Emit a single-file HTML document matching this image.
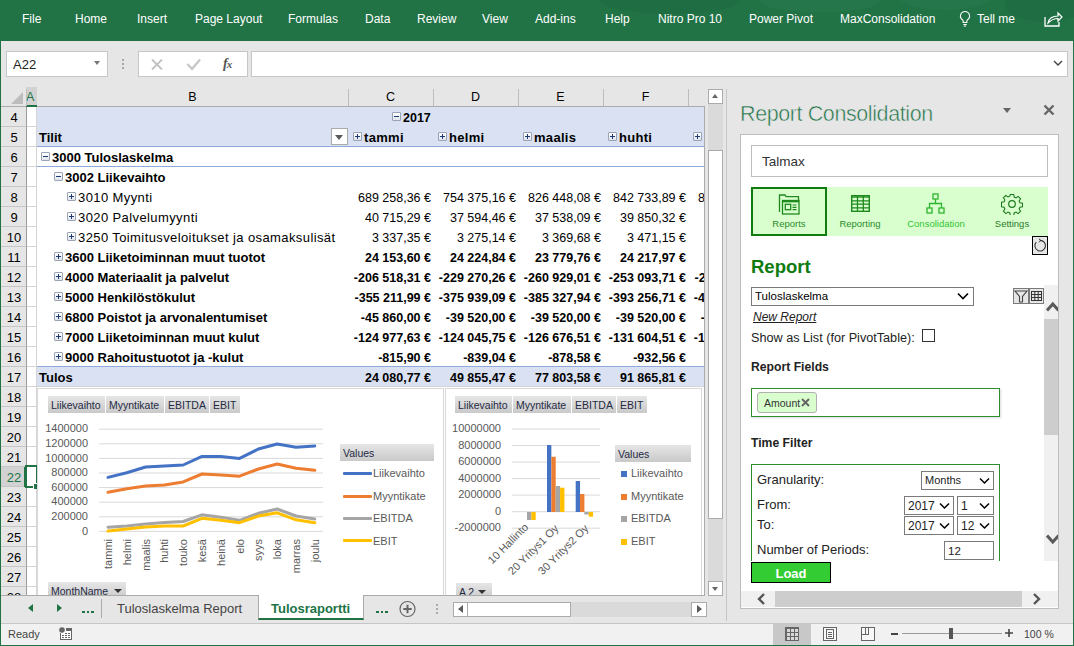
<!DOCTYPE html><html><head><meta charset="utf-8"><style>
*{box-sizing:border-box}
body{margin:0;width:1074px;height:646px;overflow:hidden;position:relative;background:#E6E6E6;font-family:"Liberation Sans",sans-serif;color:#000}
.ab{position:absolute}
.t{position:absolute;white-space:nowrap;line-height:1}
.rib{color:#fff;font-size:12px;top:13px}
.rh{position:absolute;left:1px;width:26px;height:20px;border-bottom:1px solid #C6C6C6;border-right:1px solid #9B9B9B;background:#E6E6E6;font-size:13px;text-align:center;line-height:21px;color:#000;padding-left:1px}
.cell{position:absolute;white-space:nowrap;font-size:12.5px;line-height:20px;height:20px;padding-top:1px}
.lab{font-size:13px}
.lab.r{letter-spacing:0.4px}
.num{text-align:right}
.b{font-weight:bold}
.pb{position:absolute;width:9px;height:9px;border:1px solid #9AA3B5;background:linear-gradient(#fff,#E0E4EC);border-radius:1px}
.pb:before{content:"";position:absolute;left:1px;top:3px;width:5px;height:1px;background:#1F3A73}
.pb.p:after{content:"";position:absolute;left:3px;top:1px;width:1px;height:5px;background:#1F3A73}
.fb{position:absolute;height:17px;background:linear-gradient(#E6E6E6,#C9C9C9);font-size:10.5px;line-height:18px;color:#1F2A44;padding-left:3px;white-space:nowrap;overflow:hidden}
.leg{position:absolute;font-size:11px;color:#595959;white-space:nowrap;line-height:14px}
.ax{font-size:11px;fill:#595959;font-family:"Liberation Sans",sans-serif}

</style></head><body>
<div class="ab" style="left:0;top:0;width:1074px;height:41px;background:#217346;overflow:hidden"><div class="ab" style="left:600px;top:-14px;width:140px;height:28px;border-radius:50%;background:#1F6C42;opacity:.7"></div><div class="ab" style="left:760px;top:-10px;width:120px;height:22px;border-radius:50%;background:#2A7B50;opacity:.5"></div><div class="ab" style="left:1005px;top:-12px;width:80px;height:34px;border-radius:50%;background:#1F6B41;opacity:.8"></div><div class="ab" style="left:900px;top:-14px;width:90px;height:24px;border-radius:50%;background:#2A7B50;opacity:.5"></div></div>
<div class="t rib" style="left:22px">File</div>
<div class="t rib" style="left:75px">Home</div>
<div class="t rib" style="left:137px">Insert</div>
<div class="t rib" style="left:195px">Page Layout</div>
<div class="t rib" style="left:288px">Formulas</div>
<div class="t rib" style="left:365px">Data</div>
<div class="t rib" style="left:417px">Review</div>
<div class="t rib" style="left:482px">View</div>
<div class="t rib" style="left:535px">Add-ins</div>
<div class="t rib" style="left:605px">Help</div>
<div class="t rib" style="left:658px">Nitro Pro 10</div>
<div class="t rib" style="left:749px">Power Pivot</div>
<div class="t rib" style="left:840px">MaxConsolidation</div>
<div class="t rib" style="left:977px">Tell me</div>
<svg class="ab" style="left:958px;top:10px" width="14" height="18" viewBox="0 0 14 18"><path d="M7 1.5a4.5 4.5 0 0 0-2.6 8.2c.5.4.8 1 .8 1.6v1.2h3.6v-1.2c0-.6.3-1.2.8-1.6A4.5 4.5 0 0 0 7 1.5z" fill="none" stroke="#fff" stroke-width="1.1"/><path d="M5.3 14.5h3.4M5.8 16h2.4" stroke="#fff" stroke-width="1.1"/></svg>
<svg class="ab" style="left:1043px;top:10px" width="20" height="18" viewBox="0 0 20 18"><path d="M2 7v9h14v-4" fill="none" stroke="#fff" stroke-width="1.3"/><path d="M5 13c1-5 5-7 10-7V3l4 4-4 4V8.5c-4 0-7 1.5-10 4.5z" fill="none" stroke="#fff" stroke-width="1.2"/></svg>
<div class="ab" style="left:0;top:41px;width:1px;height:605px;background:#217346"></div>
<div class="ab" style="left:1073px;top:41px;width:1px;height:605px;background:#217346"></div>
<div class="ab" style="left:0;top:645px;width:1074px;height:1px;background:#217346"></div>
<div class="ab" style="left:6px;top:51px;width:102px;height:26px;background:#fff;border:1px solid #C6C6C6"></div>
<div class="t" style="left:13px;top:58px;font-size:13px;color:#222">A22</div>
<div class="ab" style="left:94px;top:61px;width:0;height:0;border-left:3.5px solid transparent;border-right:3.5px solid transparent;border-top:4px solid #777"></div>
<div class="ab" style="left:122px;top:59px;width:2px;height:2px;background:#A8A8A8"></div>
<div class="ab" style="left:122px;top:63px;width:2px;height:2px;background:#A8A8A8"></div>
<div class="ab" style="left:122px;top:67px;width:2px;height:2px;background:#A8A8A8"></div>
<div class="ab" style="left:138px;top:51px;width:110px;height:26px;background:#fff;border:1px solid #C6C6C6"></div>
<svg class="ab" style="left:151px;top:59px" width="12" height="11"><path d="M1 0.5l10 10M11 0.5L1 10.5" stroke="#C0C0C0" stroke-width="1.8"/></svg>
<svg class="ab" style="left:186px;top:58px" width="15" height="13"><path d="M1.5 6l4.5 5 8-9.5" fill="none" stroke="#C8C8C8" stroke-width="2.4"/></svg>
<div class="t" style="left:223px;top:57px;font-family:'Liberation Serif',serif;font-style:italic;font-weight:bold;font-size:14px;color:#555">f<span style="font-size:11px;margin-left:-1px">x</span></div>
<div class="ab" style="left:251px;top:51px;width:817px;height:26px;background:#fff;border:1px solid #C6C6C6"></div>
<svg class="ab" style="left:1053px;top:60px" width="10" height="7"><path d="M1 1l4 4 4-4" fill="none" stroke="#444" stroke-width="1.4"/></svg>
<div class="ab" style="left:1px;top:87px;width:704px;height:20px;background:#E6E6E6;border-bottom:1px solid #ABABAB"></div>
<svg class="ab" style="left:10px;top:92px" width="14" height="13"><path d="M13 0V12H1z" fill="#BDBDBD"/></svg>
<div class="ab" style="left:26px;top:87px;width:11px;height:20px;background:#D2D2D2;border-bottom:2px solid #217346"></div>
<div class="t" style="left:26px;top:91px;font-size:12.5px;color:#217346">A</div>
<div class="ab" style="left:348px;top:89px;width:1px;height:17px;background:#BDBDBD"></div>
<div class="t" style="left:37px;width:311px;text-align:center;top:91px;font-size:12.5px">B</div>
<div class="ab" style="left:433px;top:89px;width:1px;height:17px;background:#BDBDBD"></div>
<div class="t" style="left:348px;width:85px;text-align:center;top:91px;font-size:12.5px">C</div>
<div class="ab" style="left:518px;top:89px;width:1px;height:17px;background:#BDBDBD"></div>
<div class="t" style="left:433px;width:85px;text-align:center;top:91px;font-size:12.5px">D</div>
<div class="ab" style="left:603px;top:89px;width:1px;height:17px;background:#BDBDBD"></div>
<div class="t" style="left:518px;width:85px;text-align:center;top:91px;font-size:12.5px">E</div>
<div class="ab" style="left:688px;top:89px;width:1px;height:17px;background:#BDBDBD"></div>
<div class="t" style="left:603px;width:85px;text-align:center;top:91px;font-size:12.5px">F</div>
<div class="ab" style="left:26px;top:89px;width:1px;height:17px;background:#BDBDBD"></div>
<div class="ab" style="left:27px;top:107px;width:677px;height:488px;background:#fff"></div>
<div class="rh" style="top:107px;">4</div>
<div class="rh" style="top:127px;">5</div>
<div class="rh" style="top:147px;">6</div>
<div class="rh" style="top:167px;">7</div>
<div class="rh" style="top:187px;">8</div>
<div class="rh" style="top:207px;">9</div>
<div class="rh" style="top:227px;">10</div>
<div class="rh" style="top:247px;">11</div>
<div class="rh" style="top:267px;">12</div>
<div class="rh" style="top:287px;">13</div>
<div class="rh" style="top:307px;">14</div>
<div class="rh" style="top:327px;">15</div>
<div class="rh" style="top:347px;">16</div>
<div class="rh" style="top:367px;">17</div>
<div class="rh" style="top:387px;">18</div>
<div class="rh" style="top:407px;">19</div>
<div class="rh" style="top:427px;">20</div>
<div class="rh" style="top:447px;">21</div>
<div class="rh" style="top:467px;background:#D2D2D2;color:#217346;">22</div>
<div class="rh" style="top:487px;">23</div>
<div class="rh" style="top:507px;">24</div>
<div class="rh" style="top:527px;">25</div>
<div class="rh" style="top:547px;">26</div>
<div class="rh" style="top:567px;">27</div>
<div class="rh" style="top:587px;">28</div>
<div class="ab" style="left:24px;top:467px;width:2px;height:20px;background:#217346"></div>
<div class="ab" style="left:27px;top:126px;width:10px;height:1px;background:#D4D4D4"></div>
<div class="ab" style="left:27px;top:146px;width:10px;height:1px;background:#D4D4D4"></div>
<div class="ab" style="left:27px;top:166px;width:10px;height:1px;background:#D4D4D4"></div>
<div class="ab" style="left:27px;top:186px;width:10px;height:1px;background:#D4D4D4"></div>
<div class="ab" style="left:27px;top:206px;width:10px;height:1px;background:#D4D4D4"></div>
<div class="ab" style="left:27px;top:226px;width:10px;height:1px;background:#D4D4D4"></div>
<div class="ab" style="left:27px;top:246px;width:10px;height:1px;background:#D4D4D4"></div>
<div class="ab" style="left:27px;top:266px;width:10px;height:1px;background:#D4D4D4"></div>
<div class="ab" style="left:27px;top:286px;width:10px;height:1px;background:#D4D4D4"></div>
<div class="ab" style="left:27px;top:306px;width:10px;height:1px;background:#D4D4D4"></div>
<div class="ab" style="left:27px;top:326px;width:10px;height:1px;background:#D4D4D4"></div>
<div class="ab" style="left:27px;top:346px;width:10px;height:1px;background:#D4D4D4"></div>
<div class="ab" style="left:27px;top:366px;width:10px;height:1px;background:#D4D4D4"></div>
<div class="ab" style="left:27px;top:386px;width:10px;height:1px;background:#D4D4D4"></div>
<div class="ab" style="left:27px;top:406px;width:10px;height:1px;background:#D4D4D4"></div>
<div class="ab" style="left:27px;top:426px;width:10px;height:1px;background:#D4D4D4"></div>
<div class="ab" style="left:27px;top:446px;width:10px;height:1px;background:#D4D4D4"></div>
<div class="ab" style="left:27px;top:466px;width:10px;height:1px;background:#D4D4D4"></div>
<div class="ab" style="left:27px;top:486px;width:10px;height:1px;background:#D4D4D4"></div>
<div class="ab" style="left:27px;top:506px;width:10px;height:1px;background:#D4D4D4"></div>
<div class="ab" style="left:27px;top:526px;width:10px;height:1px;background:#D4D4D4"></div>
<div class="ab" style="left:27px;top:546px;width:10px;height:1px;background:#D4D4D4"></div>
<div class="ab" style="left:27px;top:566px;width:10px;height:1px;background:#D4D4D4"></div>
<div class="ab" style="left:27px;top:586px;width:10px;height:1px;background:#D4D4D4"></div>
<div class="ab" style="left:27px;top:606px;width:10px;height:1px;background:#D4D4D4"></div>
<div class="ab" style="left:36px;top:107px;width:1px;height:488px;background:#D4D4D4"></div>
<div class="ab" style="left:37px;top:107px;width:667px;height:39px;background:#D9E1F2"></div>
<div class="ab" style="left:37px;top:146px;width:667px;height:1px;background:#8EA9DB"></div>
<div class="ab" style="left:37px;top:166px;width:667px;height:1px;background:#8EA9DB"></div>
<div class="ab" style="left:37px;top:366px;width:667px;height:1px;background:#8EA9DB"></div>
<div class="ab" style="left:37px;top:367px;width:667px;height:20px;background:#D9E1F2"></div>
<div class="pb" style="left:392px;top:112px"></div>
<div class="cell b" style="left:403px;top:107px">2017</div>
<div class="cell lab b" style="left:39px;top:127px">Tilit</div>
<div class="ab" style="left:331px;top:128px;width:17px;height:17px;background:#fff;border:1px solid #ABABAB"></div>
<div class="ab" style="left:335px;top:135px;width:0;height:0;border-left:4.5px solid transparent;border-right:4.5px solid transparent;border-top:5px solid #5A5A5A"></div>
<div class="pb p" style="left:353px;top:132px"></div>
<div class="cell lab b" style="left:364px;top:127px;letter-spacing:0.3px">tammi</div>
<div class="pb p" style="left:438px;top:132px"></div>
<div class="cell lab b" style="left:449px;top:127px;letter-spacing:0.3px">helmi</div>
<div class="pb p" style="left:523px;top:132px"></div>
<div class="cell lab b" style="left:534px;top:127px;letter-spacing:0.3px">maalis</div>
<div class="pb p" style="left:608px;top:132px"></div>
<div class="cell lab b" style="left:619px;top:127px;letter-spacing:0.3px">huhti</div>
<div class="pb p" style="left:693px;top:132px"></div>
<div class="pb " style="left:41px;top:152px"></div>
<div class="cell lab b" style="left:52px;top:147px">3000 Tuloslaskelma</div>
<div class="pb " style="left:54px;top:172px"></div>
<div class="cell lab b" style="left:65px;top:167px">3002 Liikevaihto</div>
<div class="pb p" style="left:67px;top:192px"></div>
<div class="cell lab r" style="left:78px;top:187px">3010 Myynti</div>
<div class="cell num" style="left:333px;width:98px;top:187px">689 258,36 €</div>
<div class="cell num" style="left:418px;width:98px;top:187px">754 375,16 €</div>
<div class="cell num" style="left:503px;width:98px;top:187px">826 448,08 €</div>
<div class="cell num" style="left:588px;width:98px;top:187px">842 733,89 €</div>
<div class="ab" style="left:688px;top:187px;width:16px;height:20px;overflow:hidden"><div class="cell num" style="left:-15px;width:98px;top:0">812 455,21 €</div></div>
<div class="pb p" style="left:67px;top:212px"></div>
<div class="cell lab r" style="left:78px;top:207px">3020 Palvelumyynti</div>
<div class="cell num" style="left:333px;width:98px;top:207px">40 715,29 €</div>
<div class="cell num" style="left:418px;width:98px;top:207px">37 594,46 €</div>
<div class="cell num" style="left:503px;width:98px;top:207px">37 538,09 €</div>
<div class="cell num" style="left:588px;width:98px;top:207px">39 850,32 €</div>
<div class="ab" style="left:688px;top:207px;width:16px;height:20px;overflow:hidden"><div class="cell num" style="left:-15px;width:98px;top:0">38 112,05 €</div></div>
<div class="pb p" style="left:67px;top:232px"></div>
<div class="cell lab r" style="left:78px;top:227px">3250 Toimitusveloitukset ja osamaksulisät</div>
<div class="cell num" style="left:333px;width:98px;top:227px">3 337,35 €</div>
<div class="cell num" style="left:418px;width:98px;top:227px">3 275,14 €</div>
<div class="cell num" style="left:503px;width:98px;top:227px">3 369,68 €</div>
<div class="cell num" style="left:588px;width:98px;top:227px">3 471,15 €</div>
<div class="ab" style="left:688px;top:227px;width:16px;height:20px;overflow:hidden"><div class="cell num" style="left:-15px;width:98px;top:0">3 402,77 €</div></div>
<div class="pb p" style="left:54px;top:252px"></div>
<div class="cell lab b" style="left:65px;top:247px">3600 Liiketoiminnan muut tuotot</div>
<div class="cell num b" style="left:333px;width:98px;top:247px">24 153,60 €</div>
<div class="cell num b" style="left:418px;width:98px;top:247px">24 224,84 €</div>
<div class="cell num b" style="left:503px;width:98px;top:247px">23 779,76 €</div>
<div class="cell num b" style="left:588px;width:98px;top:247px">24 217,97 €</div>
<div class="ab" style="left:688px;top:247px;width:16px;height:20px;overflow:hidden"><div class="cell num b" style="left:-15px;width:98px;top:0">24 301,12 €</div></div>
<div class="pb p" style="left:54px;top:272px"></div>
<div class="cell lab b" style="left:65px;top:267px">4000 Materiaalit ja palvelut</div>
<div class="cell num b" style="left:333px;width:98px;top:267px">-206 518,31 €</div>
<div class="cell num b" style="left:418px;width:98px;top:267px">-229 270,26 €</div>
<div class="cell num b" style="left:503px;width:98px;top:267px">-260 929,01 €</div>
<div class="cell num b" style="left:588px;width:98px;top:267px">-253 093,71 €</div>
<div class="ab" style="left:688px;top:267px;width:16px;height:20px;overflow:hidden"><div class="cell num b" style="left:-15px;width:98px;top:0">-241 118,40 €</div></div>
<div class="pb p" style="left:54px;top:292px"></div>
<div class="cell lab b" style="left:65px;top:287px">5000 Henkilöstökulut</div>
<div class="cell num b" style="left:333px;width:98px;top:287px">-355 211,99 €</div>
<div class="cell num b" style="left:418px;width:98px;top:287px">-375 939,09 €</div>
<div class="cell num b" style="left:503px;width:98px;top:287px">-385 327,94 €</div>
<div class="cell num b" style="left:588px;width:98px;top:287px">-393 256,71 €</div>
<div class="ab" style="left:688px;top:287px;width:16px;height:20px;overflow:hidden"><div class="cell num b" style="left:-15px;width:98px;top:0">-401 882,15 €</div></div>
<div class="pb p" style="left:54px;top:312px"></div>
<div class="cell lab b" style="left:65px;top:307px">6800 Poistot ja arvonalentumiset</div>
<div class="cell num b" style="left:333px;width:98px;top:307px">-45 860,00 €</div>
<div class="cell num b" style="left:418px;width:98px;top:307px">-39 520,00 €</div>
<div class="cell num b" style="left:503px;width:98px;top:307px">-39 520,00 €</div>
<div class="cell num b" style="left:588px;width:98px;top:307px">-39 520,00 €</div>
<div class="ab" style="left:688px;top:307px;width:16px;height:20px;overflow:hidden"><div class="cell num b" style="left:-15px;width:98px;top:0">-39 520,00 €</div></div>
<div class="pb p" style="left:54px;top:332px"></div>
<div class="cell lab b" style="left:65px;top:327px">7000 Liiketoiminnan muut kulut</div>
<div class="cell num b" style="left:333px;width:98px;top:327px">-124 977,63 €</div>
<div class="cell num b" style="left:418px;width:98px;top:327px">-124 045,75 €</div>
<div class="cell num b" style="left:503px;width:98px;top:327px">-126 676,51 €</div>
<div class="cell num b" style="left:588px;width:98px;top:327px">-131 604,51 €</div>
<div class="ab" style="left:688px;top:327px;width:16px;height:20px;overflow:hidden"><div class="cell num b" style="left:-15px;width:98px;top:0">-128 330,62 €</div></div>
<div class="pb p" style="left:54px;top:352px"></div>
<div class="cell lab b" style="left:65px;top:347px">9000 Rahoitustuotot ja -kulut</div>
<div class="cell num b" style="left:333px;width:98px;top:347px">-815,90 €</div>
<div class="cell num b" style="left:418px;width:98px;top:347px">-839,04 €</div>
<div class="cell num b" style="left:503px;width:98px;top:347px">-878,58 €</div>
<div class="cell num b" style="left:588px;width:98px;top:347px">-932,56 €</div>
<div class="ab" style="left:688px;top:347px;width:16px;height:20px;overflow:hidden"><div class="cell num b" style="left:-15px;width:98px;top:0">-901,33 €</div></div>
<div class="cell lab b" style="left:39px;top:367px">Tulos</div>
<div class="cell num b" style="left:333px;width:98px;top:367px">24 080,77 €</div>
<div class="cell num b" style="left:418px;width:98px;top:367px">49 855,47 €</div>
<div class="cell num b" style="left:503px;width:98px;top:367px">77 803,58 €</div>
<div class="cell num b" style="left:588px;width:98px;top:367px">91 865,81 €</div>
<div class="ab" style="left:37px;top:386px;width:667px;height:1px;background:#D4D4D4"></div>
<div class="ab" style="left:25px;top:465px;width:13px;height:23px;border:2px solid #217346"></div>
<div class="ab" style="left:33px;top:483px;width:6px;height:6px;background:#217346;border-left:1px solid #fff;border-top:1px solid #fff"></div>
<div class="ab" style="left:37px;top:388px;width:407px;height:220px;background:#fff;border:1px solid #D9D9D9"></div>
<div class="fb" style="left:48px;top:396px;width:57px">Liikevaihto</div>
<div class="fb" style="left:106px;top:396px;width:58px">Myyntikate</div>
<div class="fb" style="left:165px;top:396px;width:44px">EBITDA</div>
<div class="fb" style="left:210px;top:396px;width:30px">EBIT</div>
<svg class="ab" style="left:37px;top:388px" width="407" height="207"><line x1="62" x2="286" y1="143.4" y2="143.4" stroke="#D9D9D9" stroke-width="1"/><text class="ax" x="51" y="146.6" text-anchor="end">0</text><line x1="62" x2="286" y1="128.8" y2="128.8" stroke="#D9D9D9" stroke-width="1"/><text class="ax" x="51" y="132.0" text-anchor="end">200000</text><line x1="62" x2="286" y1="114.2" y2="114.2" stroke="#D9D9D9" stroke-width="1"/><text class="ax" x="51" y="117.4" text-anchor="end">400000</text><line x1="62" x2="286" y1="99.6" y2="99.6" stroke="#D9D9D9" stroke-width="1"/><text class="ax" x="51" y="102.8" text-anchor="end">600000</text><line x1="62" x2="286" y1="85.0" y2="85.0" stroke="#D9D9D9" stroke-width="1"/><text class="ax" x="51" y="88.2" text-anchor="end">800000</text><line x1="62" x2="286" y1="70.4" y2="70.4" stroke="#D9D9D9" stroke-width="1"/><text class="ax" x="51" y="73.6" text-anchor="end">1000000</text><line x1="62" x2="286" y1="55.8" y2="55.8" stroke="#D9D9D9" stroke-width="1"/><text class="ax" x="51" y="59.0" text-anchor="end">1200000</text><line x1="62" x2="286" y1="41.2" y2="41.2" stroke="#D9D9D9" stroke-width="1"/><text class="ax" x="51" y="44.4" text-anchor="end">1400000</text><polyline points="71.0,89.4 89.8,84.7 108.6,79.0 127.4,78.0 146.2,77.0 165.0,68.4 183.8,68.6 202.6,70.4 221.4,61.0 240.2,56.0 259.0,59.2 277.8,58.0" fill="none" stroke="#4472C4" stroke-width="3" stroke-linejoin="round" stroke-linecap="round"/><polyline points="71.0,104.3 89.8,100.8 108.6,98.0 127.4,96.9 146.2,93.9 165.0,86.0 183.8,87.0 202.6,88.2 221.4,81.0 240.2,76.0 259.0,80.3 277.8,82.3" fill="none" stroke="#ED7D31" stroke-width="3" stroke-linejoin="round" stroke-linecap="round"/><polyline points="71.0,139.2 89.8,138.0 108.6,136.0 127.4,134.5 146.2,133.5 165.0,126.8 183.8,129.3 202.6,132.3 221.4,125.3 240.2,121.0 259.0,128.0 277.8,131.0" fill="none" stroke="#A5A5A5" stroke-width="3" stroke-linejoin="round" stroke-linecap="round"/><polyline points="71.0,143.0 89.8,141.0 108.6,139.0 127.4,138.0 146.2,138.0 165.0,130.3 183.8,132.3 202.6,134.7 221.4,128.0 240.2,124.8 259.0,131.8 277.8,134.7" fill="none" stroke="#FFC000" stroke-width="3" stroke-linejoin="round" stroke-linecap="round"/><text class="ax" transform="translate(75.0,151) rotate(-90)" text-anchor="end">tammi</text><text class="ax" transform="translate(93.8,151) rotate(-90)" text-anchor="end">helmi</text><text class="ax" transform="translate(112.6,151) rotate(-90)" text-anchor="end">maalis</text><text class="ax" transform="translate(131.4,151) rotate(-90)" text-anchor="end">huhti</text><text class="ax" transform="translate(150.2,151) rotate(-90)" text-anchor="end">touko</text><text class="ax" transform="translate(169.0,151) rotate(-90)" text-anchor="end">kesä</text><text class="ax" transform="translate(187.8,151) rotate(-90)" text-anchor="end">heinä</text><text class="ax" transform="translate(206.6,151) rotate(-90)" text-anchor="end">elo</text><text class="ax" transform="translate(225.4,151) rotate(-90)" text-anchor="end">syys</text><text class="ax" transform="translate(244.2,151) rotate(-90)" text-anchor="end">loka</text><text class="ax" transform="translate(263.0,151) rotate(-90)" text-anchor="end">marras</text><text class="ax" transform="translate(281.8,151) rotate(-90)" text-anchor="end">joulu</text></svg>
<div class="fb" style="left:340px;top:444px;width:94px;height:17px">Values</div>
<div class="ab" style="left:343px;top:471.8px;width:29px;height:3px;background:#4472C4;border-radius:1px"></div>
<div class="leg" style="left:373px;top:466.3px">Liikevaihto</div>
<div class="ab" style="left:343px;top:494.5px;width:29px;height:3px;background:#ED7D31;border-radius:1px"></div>
<div class="leg" style="left:373px;top:489px">Myyntikate</div>
<div class="ab" style="left:343px;top:516.5px;width:29px;height:3px;background:#A5A5A5;border-radius:1px"></div>
<div class="leg" style="left:373px;top:511px">EBITDA</div>
<div class="ab" style="left:343px;top:539.2px;width:29px;height:3px;background:#FFC000;border-radius:1px"></div>
<div class="leg" style="left:373px;top:533.7px">EBIT</div>
<div class="fb" style="left:48px;top:582px;width:78px;height:17px">MonthName<span style="position:absolute;left:66px;top:7px;border-left:4px solid transparent;border-right:4px solid transparent;border-top:4px solid #333"></span></div>
<div class="ab" style="left:445px;top:388px;width:257px;height:220px;background:#fff;border:1px solid #D9D9D9"></div>
<div class="fb" style="left:455px;top:396px;width:57px">Liikevaihto</div>
<div class="fb" style="left:513px;top:396px;width:58px">Myyntikate</div>
<div class="fb" style="left:572px;top:396px;width:44px">EBITDA</div>
<div class="fb" style="left:617px;top:396px;width:30px">EBIT</div>
<svg class="ab" style="left:445px;top:388px" width="257" height="207"><line x1="67" x2="155" y1="140.2" y2="140.2" stroke="#D9D9D9"/><text class="ax" x="56" y="143.4" text-anchor="end">-2000000</text><line x1="67" x2="155" y1="123.7" y2="123.7" stroke="#D9D9D9"/><text class="ax" x="56" y="126.9" text-anchor="end">0</text><line x1="67" x2="155" y1="107.1" y2="107.1" stroke="#D9D9D9"/><text class="ax" x="56" y="110.3" text-anchor="end">2000000</text><line x1="67" x2="155" y1="90.6" y2="90.6" stroke="#D9D9D9"/><text class="ax" x="56" y="93.8" text-anchor="end">4000000</text><line x1="67" x2="155" y1="74.1" y2="74.1" stroke="#D9D9D9"/><text class="ax" x="56" y="77.3" text-anchor="end">6000000</text><line x1="67" x2="155" y1="57.6" y2="57.6" stroke="#D9D9D9"/><text class="ax" x="56" y="60.8" text-anchor="end">8000000</text><line x1="67" x2="155" y1="41.0" y2="41.0" stroke="#D9D9D9"/><text class="ax" x="56" y="44.2" text-anchor="end">10000000</text><rect x="82.00" y="124.0" width="4.35" height="8.0" fill="#A5A5A5"/><rect x="86.35" y="124.0" width="4.35" height="8.0" fill="#FFC000"/><rect x="102.00" y="57.0" width="4.35" height="67.0" fill="#4472C4"/><rect x="106.35" y="68.8" width="4.35" height="55.2" fill="#ED7D31"/><rect x="110.70" y="98.0" width="4.35" height="26.0" fill="#A5A5A5"/><rect x="115.05" y="99.7" width="4.35" height="24.3" fill="#FFC000"/><rect x="130.70" y="93.0" width="4.35" height="31.0" fill="#4472C4"/><rect x="135.05" y="106.0" width="4.35" height="18.0" fill="#ED7D31"/><rect x="139.40" y="124.0" width="4.35" height="2.5" fill="#A5A5A5"/><rect x="143.75" y="124.0" width="4.35" height="4.7" fill="#FFC000"/><text class="ax" transform="translate(84.1,139.8) rotate(-45)" text-anchor="end">10 Hallinto</text><text class="ax" transform="translate(114.1,141.0) rotate(-45)" text-anchor="end">20 Yritys1 Oy</text><text class="ax" transform="translate(144.1,141.0) rotate(-45)" text-anchor="end">30 Yritys2 Oy</text></svg>
<div class="fb" style="left:615px;top:445px;width:76px;height:17px">Values</div>
<div class="ab" style="left:621px;top:471px;width:6px;height:6px;background:#4472C4"></div>
<div class="leg" style="left:631px;top:466px">Liikevaihto</div>
<div class="ab" style="left:621px;top:494px;width:6px;height:6px;background:#ED7D31"></div>
<div class="leg" style="left:631px;top:489px">Myyntikate</div>
<div class="ab" style="left:621px;top:515.7px;width:6px;height:6px;background:#A5A5A5"></div>
<div class="leg" style="left:631px;top:510.70000000000005px">EBITDA</div>
<div class="ab" style="left:621px;top:538.5px;width:6px;height:6px;background:#FFC000"></div>
<div class="leg" style="left:631px;top:533.5px">EBIT</div>
<div class="fb" style="left:456px;top:583px;width:36px;height:17px">A 2<span style="position:absolute;left:22px;top:7px;border-left:4px solid transparent;border-right:4px solid transparent;border-top:4px solid #333"></span></div>
<div class="ab" style="left:704px;top:87px;width:22px;height:508px;background:#E6E6E6"></div>
<div class="ab" style="left:708px;top:89px;width:15px;height:503px;background:#DADADA"></div>
<div class="ab" style="left:708px;top:89px;width:15px;height:15px;background:#fff;border:1px solid #ABABAB"></div>
<div class="ab" style="left:712px;top:94px;border-left:3.5px solid transparent;border-right:3.5px solid transparent;border-bottom:4px solid #666"></div>
<div class="ab" style="left:708px;top:150px;width:15px;height:369px;background:#fff;border:1px solid #ABABAB"></div>
<div class="ab" style="left:708px;top:581px;width:15px;height:15px;background:#fff;border:1px solid #ABABAB"></div>
<div class="ab" style="left:712px;top:587px;border-left:3.5px solid transparent;border-right:3.5px solid transparent;border-top:4px solid #666"></div>
<div class="ab" style="left:726px;top:89px;width:1px;height:532px;background:#C6C6C6"></div>
<div class="ab" style="left:704px;top:106px;width:1px;height:490px;background:#ABABAB"></div>
<div class="ab" style="left:1px;top:596px;width:725px;height:27px;background:#E6E6E6"></div>
<div class="ab" style="left:1px;top:595px;width:704px;height:1px;background:#ABABAB"></div>
<div class="ab" style="left:28px;top:604px;border-top:4.5px solid transparent;border-bottom:4.5px solid transparent;border-right:5px solid #217346"></div>
<div class="ab" style="left:57px;top:604px;border-top:4.5px solid transparent;border-bottom:4.5px solid transparent;border-left:5px solid #217346"></div>
<div class="ab" style="left:82px;top:610.5px;width:2.6px;height:2.6px;background:#217346"></div>
<div class="ab" style="left:86.5px;top:610.5px;width:2.6px;height:2.6px;background:#217346"></div>
<div class="ab" style="left:91px;top:610.5px;width:2.6px;height:2.6px;background:#217346"></div>
<div class="ab" style="left:101px;top:599px;width:1px;height:19px;background:#ABABAB"></div>
<div class="t" style="left:117px;top:602px;font-size:13px;color:#444">Tuloslaskelma Report</div>
<div class="ab" style="left:258px;top:595px;width:106px;height:25px;background:#fff;border-bottom:2px solid #217346;border-left:1px solid #ABABAB;border-right:1px solid #ABABAB"></div>
<div class="t" style="left:271px;top:602px;font-size:13px;font-weight:bold;color:#217346">Tulosraportti</div>
<div class="ab" style="left:376px;top:610.5px;width:2.6px;height:2.6px;background:#217346"></div>
<div class="ab" style="left:380.5px;top:610.5px;width:2.6px;height:2.6px;background:#217346"></div>
<div class="ab" style="left:385px;top:610.5px;width:2.6px;height:2.6px;background:#217346"></div>
<svg class="ab" style="left:399px;top:600px" width="18" height="18"><circle cx="8.5" cy="9" r="7.5" fill="none" stroke="#666" stroke-width="1.2"/><path d="M8.5 4.8v8.4M4.3 9h8.4" stroke="#666" stroke-width="2"/></svg>
<div class="ab" style="left:436px;top:604px;width:2px;height:2px;background:#ABABAB"></div>
<div class="ab" style="left:436px;top:608px;width:2px;height:2px;background:#ABABAB"></div>
<div class="ab" style="left:436px;top:612px;width:2px;height:2px;background:#ABABAB"></div>
<div class="ab" style="left:453px;top:602px;width:254px;height:15px;background:#DADADA"></div>
<div class="ab" style="left:453px;top:602px;width:15px;height:15px;background:#fff;border:1px solid #ABABAB"></div>
<div class="ab" style="left:458px;top:605px;border-top:4.5px solid transparent;border-bottom:4.5px solid transparent;border-right:5px solid #5A5A5A"></div>
<div class="ab" style="left:467px;top:602px;width:104px;height:15px;background:#fff;border:1px solid #ABABAB"></div>
<div class="ab" style="left:691px;top:602px;width:16px;height:15px;background:#fff;border:1px solid #ABABAB"></div>
<div class="ab" style="left:697px;top:605px;border-top:4.5px solid transparent;border-bottom:4.5px solid transparent;border-left:5px solid #5A5A5A"></div>
<div class="ab" style="left:1px;top:623px;width:1072px;height:22px;background:#F1F1F1;border-top:1px solid #C6C6C6"></div>
<div class="t" style="left:8px;top:629px;font-size:11px;color:#444">Ready</div>
<svg class="ab" style="left:59px;top:627px" width="14" height="14" shape-rendering="crispEdges"><rect x="1" y="1" width="12" height="12" fill="#fff"/><rect x="1" y="1" width="1" height="12" fill="#666"/><rect x="12" y="1" width="1" height="12" fill="#666"/><rect x="1" y="12" width="12" height="1" fill="#666"/><rect x="7" y="1" width="6" height="3" fill="#666"/><circle cx="3" cy="3" r="3.3" fill="#F1F1F1" shape-rendering="auto"/><circle cx="3" cy="3" r="2.8" fill="#666" shape-rendering="auto"/><rect x="6" y="6" width="2" height="1" fill="#666"/><rect x="9" y="6" width="2" height="1" fill="#666"/><rect x="3" y="8" width="2" height="1" fill="#666"/><rect x="6" y="8" width="2" height="1" fill="#666"/><rect x="9" y="8" width="2" height="1" fill="#666"/><rect x="3" y="10" width="2" height="1" fill="#666"/><rect x="6" y="10" width="2" height="1" fill="#666"/><rect x="9" y="10" width="2" height="1" fill="#666"/></svg>
<div class="ab" style="left:773px;top:624px;width:38px;height:21px;background:#C8C8C8"></div>
<svg class="ab" style="left:785px;top:627px" width="14" height="14" shape-rendering="crispEdges"><rect x="0" y="0" width="14" height="14" fill="#666"/><rect x="2" y="2" width="3" height="3" fill="#D8D8D8"/><rect x="6" y="2" width="3" height="3" fill="#D8D8D8"/><rect x="10" y="2" width="3" height="3" fill="#D8D8D8"/><rect x="2" y="6" width="3" height="3" fill="#D8D8D8"/><rect x="6" y="6" width="3" height="3" fill="#D8D8D8"/><rect x="10" y="6" width="3" height="3" fill="#D8D8D8"/><rect x="2" y="10" width="3" height="3" fill="#D8D8D8"/><rect x="6" y="10" width="3" height="3" fill="#D8D8D8"/><rect x="10" y="10" width="3" height="3" fill="#D8D8D8"/></svg>
<svg class="ab" style="left:823px;top:627px" width="14" height="14" shape-rendering="crispEdges"><rect x="0" y="0" width="14" height="14" fill="#666"/><rect x="1" y="1" width="12" height="12" fill="#F8F8F8"/><rect x="3" y="2" width="8" height="10" fill="#666"/><rect x="4" y="3" width="6" height="8" fill="#F8F8F8"/><rect x="5" y="5" width="4" height="1" fill="#666"/><rect x="5" y="7" width="4" height="1" fill="#666"/><rect x="5" y="9" width="4" height="1" fill="#666"/></svg>
<svg class="ab" style="left:861px;top:627px" width="14" height="14" shape-rendering="crispEdges"><rect x="0" y="0" width="14" height="14" fill="#666"/><rect x="1" y="1" width="12" height="12" fill="#F8F8F8"/><rect x="4" y="0" width="1" height="8" fill="#666"/><rect x="7" y="0" width="1" height="8" fill="#666"/><rect x="0" y="7" width="8" height="1" fill="#666"/></svg>
<div class="ab" style="left:891px;top:633px;width:7px;height:2px;background:#444"></div>
<div class="ab" style="left:902px;top:633px;width:100px;height:1px;background:#9B9B9B"></div>
<div class="ab" style="left:949px;top:628px;width:4px;height:11px;background:#555"></div>
<svg class="ab" style="left:1004px;top:628px" width="10" height="10"><path d="M5 1v8M1 5h8" stroke="#444" stroke-width="1.6"/></svg>
<div class="t" style="left:1024px;top:629px;font-size:10.5px;color:#444">100 %</div>
<div class="t" style="left:740px;top:104px;font-size:21.5px;letter-spacing:-0.4px;color:#217346;-webkit-text-stroke:0.5px #E6E6E6">Report Consolidation</div>
<div class="ab" style="left:1003px;top:108px;border-left:4.5px solid transparent;border-right:4.5px solid transparent;border-top:5px solid #666"></div>
<svg class="ab" style="left:1043px;top:104px" width="12" height="12"><path d="M1.5 1.5l9 9M10.5 1.5l-9 9" stroke="#666" stroke-width="2.4"/></svg>
<div class="ab" style="left:740px;top:134px;width:319px;height:475px;background:#fff;border:1px solid #BDBDBD"></div>
<div class="ab" style="left:751px;top:145px;width:297px;height:32px;border:1px solid #BDBDBD;background:#fff"></div>
<div class="t" style="left:762px;top:155px;font-size:13.5px;color:#333">Talmax</div>
<div class="ab" style="left:751px;top:187px;width:297px;height:49px;background:#D9FFCF"></div>
<div class="ab" style="left:751px;top:187px;width:76px;height:49px;border:2px solid #107C10"></div>
<div class="t" style="left:749px;width:80px;text-align:center;top:219px;font-size:9.5px;color:#2A8A2A">Reports</div>
<div class="t" style="left:820px;width:80px;text-align:center;top:219px;font-size:9.5px;color:#2A8A2A">Reporting</div>
<div class="t" style="left:896px;width:80px;text-align:center;top:219px;font-size:9.5px;color:#33C433">Consolidation</div>
<div class="t" style="left:972px;width:80px;text-align:center;top:219px;font-size:9.5px;color:#2A7A2A">Settings</div>
<svg class="ab" style="left:777px;top:193px" width="24" height="23" viewBox="0 0 24 23"><path d="M2.5 19V2h5.5l1.2 1.6h12.3V8" fill="none" stroke="#1E8A1E" stroke-width="1.3"/><rect x="5.5" y="7.5" width="16.5" height="13.5" fill="none" stroke="#1E8A1E" stroke-width="1.3"/><path d="M5.5 8.6h16.5" stroke="#1E8A1E" stroke-width="1.5"/><rect x="8.3" y="11.3" width="5.4" height="5.4" fill="none" stroke="#1E8A1E" stroke-width="1.3"/><path d="M15.5 12h4M15.5 14.3h4M15.5 16.6h4" stroke="#1E8A1E" stroke-width="1.2"/></svg>
<svg class="ab" style="left:851px;top:195px" width="19" height="17"><rect x="0.7" y="0.7" width="17.6" height="15.6" fill="none" stroke="#1E8A1E" stroke-width="1.4"/><path d="M0.7 2h17.6" stroke="#1E8A1E" stroke-width="1.4"/><path d="M0.7 5.8h17.6M0.7 9.2h17.6M0.7 12.8h17.6M6.5 1v15M12.3 1v15" stroke="#1E8A1E" stroke-width="1.3"/></svg>
<svg class="ab" style="left:925px;top:193px" width="22" height="22"><rect x="8" y="1" width="5" height="5" fill="none" stroke="#2DB52D" stroke-width="1.3"/><rect x="2" y="15" width="5" height="5" fill="none" stroke="#2DB52D" stroke-width="1.3"/><rect x="14" y="15" width="5" height="5" fill="none" stroke="#2DB52D" stroke-width="1.3"/><path d="M10.5 6v4.5M4.5 15v-4.5h12V15" fill="none" stroke="#2DB52D" stroke-width="1.3"/></svg>
<svg class="ab" style="left:1001px;top:193px" width="22" height="22" viewBox="0 0 22 22"><path d="M9.3 1.5h3.4l.5 2.6 1.8.8 2.2-1.5 2.4 2.4-1.5 2.2.8 1.8 2.6.5v3.4l-2.6.5-.8 1.8 1.5 2.2-2.4 2.4-2.2-1.5-1.8.8-.5 2.6H9.3l-.5-2.6-1.8-.8-2.2 1.5-2.4-2.4 1.5-2.2-.8-1.8-2.6-.5V9.3l2.6-.5.8-1.8-1.5-2.2 2.4-2.4 2.2 1.5 1.8-.8z" fill="none" stroke="#1E7A1E" stroke-width="1.1"/><circle cx="11" cy="11" r="3.3" fill="none" stroke="#1E7A1E" stroke-width="1.2"/></svg>
<div class="ab" style="left:1032px;top:236px;width:16px;height:19px;border:1px solid #000;background:#E6E6E6"></div>
<svg class="ab" style="left:1033px;top:238px" width="14" height="15"><path d="M3.2 4.2A5.3 5.3 0 1 0 6.8 2.4" fill="none" stroke="#333" stroke-width="1.1"/><path d="M6 0.8L7.8 2.5 6 4.3" fill="none" stroke="#333" stroke-width="1"/></svg>
<div class="t" style="left:751px;top:258px;font-size:18.5px;font-weight:bold;color:#107C10">Report</div>
<div class="ab" style="left:751px;top:287px;width:223px;height:19px;border:1px solid #7A7A7A;background:#fff"></div>
<div class="t" style="left:755px;top:291px;font-size:11.5px;color:#000">Tuloslaskelma</div>
<svg class="ab" style="left:957px;top:292px" width="12" height="9"><path d="M1 1.5l5 5 5-5" fill="none" stroke="#000" stroke-width="1.6"/></svg>
<div class="ab" style="left:1013px;top:288px;width:16px;height:16px;border:1px solid #7A7A7A;background:#E6E6E6"></div>
<svg class="ab" style="left:1014px;top:290px" width="14" height="13"><path d="M1 1h12L8.5 6.5V12h-3V6.5z" fill="none" stroke="#444" stroke-width="1.1"/></svg>
<div class="ab" style="left:1029px;top:288px;width:15px;height:16px;border:1px solid #7A7A7A;background:#E6E6E6"></div>
<svg class="ab" style="left:1031px;top:291px" width="11" height="10"><rect x="0.5" y="0.5" width="10" height="9" fill="none" stroke="#333"/><path d="M0.5 3.5h10M0.5 6.5h10M3.8 0.5v9M7.2 0.5v9" stroke="#333"/></svg>
<div class="t" style="left:753px;top:311px;font-size:12px;font-style:italic;text-decoration:underline;color:#222">New Report</div>
<div class="t" style="left:751px;top:332px;font-size:12.65px;color:#222">Show as List (for PivotTable):</div>
<div class="ab" style="left:922px;top:329px;width:13px;height:13px;border:1px solid #333;background:#fff"></div>
<div class="t" style="left:751px;top:361px;font-size:12.2px;font-weight:bold;color:#222">Report Fields</div>
<div class="ab" style="left:751px;top:388px;width:249px;height:29px;border:1px solid #2E8B2E;background:#fff;box-shadow:1px 1px 2px rgba(0,0,0,.15)"></div>
<div class="ab" style="left:757px;top:392px;width:60px;height:21px;border:1px solid #B0B0B0;border-radius:3px;background:#D9FFCF"></div>
<div class="t" style="left:764px;top:398px;font-size:10.5px;color:#333">Amount</div>
<svg class="ab" style="left:801px;top:398px" width="9" height="9"><path d="M1 1l7 7M8 1L1 8" stroke="#666" stroke-width="2"/></svg>
<div class="t" style="left:751px;top:437px;font-size:12.2px;font-weight:bold;color:#222">Time Filter</div>
<div class="ab" style="left:751px;top:464px;width:249px;height:97px;border:1px solid #2E8B2E;border-bottom:none;background:#fff"></div>
<div class="t" style="left:757px;top:473px;font-size:13px;color:#222">Granularity:</div>
<div class="ab" style="left:921px;top:471px;width:73px;height:19px;border:1px solid #7A7A7A;background:#fff"></div>
<div class="t" style="left:925px;top:475px;font-size:11px;color:#222">Months</div>
<svg class="ab" style="left:979px;top:477px" width="11" height="8"><path d="M1 1.5l4.5 4.5 4.5-4.5" fill="none" stroke="#000" stroke-width="1.5"/></svg>
<div class="t" style="left:757px;top:498px;font-size:13px;color:#222">From:</div>
<div class="ab" style="left:904px;top:496px;width:50px;height:19px;border:1px solid #7A7A7A;background:#fff"></div>
<div class="t" style="left:908px;top:500px;font-size:12px;color:#222">2017</div>
<svg class="ab" style="left:939px;top:502px" width="11" height="8"><path d="M1 1.5l4.5 4.5 4.5-4.5" fill="none" stroke="#000" stroke-width="1.5"/></svg>
<div class="ab" style="left:957px;top:496px;width:37px;height:19px;border:1px solid #7A7A7A;background:#fff"></div>
<div class="t" style="left:961px;top:500px;font-size:12px;color:#222">1</div>
<svg class="ab" style="left:979px;top:502px" width="11" height="8"><path d="M1 1.5l4.5 4.5 4.5-4.5" fill="none" stroke="#000" stroke-width="1.5"/></svg>
<div class="t" style="left:757px;top:518px;font-size:13px;color:#222">To:</div>
<div class="ab" style="left:904px;top:516px;width:50px;height:19px;border:1px solid #7A7A7A;background:#fff"></div>
<div class="t" style="left:908px;top:520px;font-size:12px;color:#222">2017</div>
<svg class="ab" style="left:939px;top:522px" width="11" height="8"><path d="M1 1.5l4.5 4.5 4.5-4.5" fill="none" stroke="#000" stroke-width="1.5"/></svg>
<div class="ab" style="left:957px;top:516px;width:37px;height:19px;border:1px solid #7A7A7A;background:#fff"></div>
<div class="t" style="left:961px;top:520px;font-size:12px;color:#222">12</div>
<svg class="ab" style="left:979px;top:522px" width="11" height="8"><path d="M1 1.5l4.5 4.5 4.5-4.5" fill="none" stroke="#000" stroke-width="1.5"/></svg>
<div class="t" style="left:757px;top:543px;font-size:13px;color:#222">Number of Periods:</div>
<div class="ab" style="left:944px;top:541px;width:50px;height:19px;border:1px solid #7A7A7A;background:#fff"></div>
<div class="t" style="left:948px;top:546px;font-size:11.5px;color:#222">12</div>
<div class="ab" style="left:751px;top:561px;width:250px;height:0;"></div>
<div class="ab" style="left:751px;top:562px;width:80px;height:21px;border:1px solid #000;background:#33CC33"></div>
<div class="t" style="left:751px;width:80px;text-align:center;top:567px;font-size:13px;font-weight:bold;color:#fff">Load</div>
<div class="ab" style="left:1044px;top:285px;width:14px;height:276px;background:#F0F0F0"></div>
<div class="ab" style="left:1044px;top:319px;width:14px;height:116px;background:#CDCDCD"></div>
<svg class="ab" style="left:1046px;top:301px" width="12" height="11"><path d="M1 9.5l5.8-6.5 5.8 6.5" fill="none" stroke="#5A5A5A" stroke-width="3"/></svg>
<svg class="ab" style="left:1046px;top:534px" width="12" height="11"><path d="M1 1.5l5.8 6.5 5.8-6.5" fill="none" stroke="#5A5A5A" stroke-width="3"/></svg>
<div class="ab" style="left:741px;top:591px;width:317px;height:16px;background:#F0F0F0"></div>
<div class="ab" style="left:775px;top:591px;width:247px;height:16px;background:#CDCDCD"></div>
<svg class="ab" style="left:757px;top:593px" width="9" height="12"><path d="M7 1L2 6l5 5" fill="none" stroke="#555" stroke-width="2.4"/></svg>
<svg class="ab" style="left:1032px;top:593px" width="9" height="12"><path d="M2 1l5 5-5 5" fill="none" stroke="#555" stroke-width="2.4"/></svg>
</body></html>
